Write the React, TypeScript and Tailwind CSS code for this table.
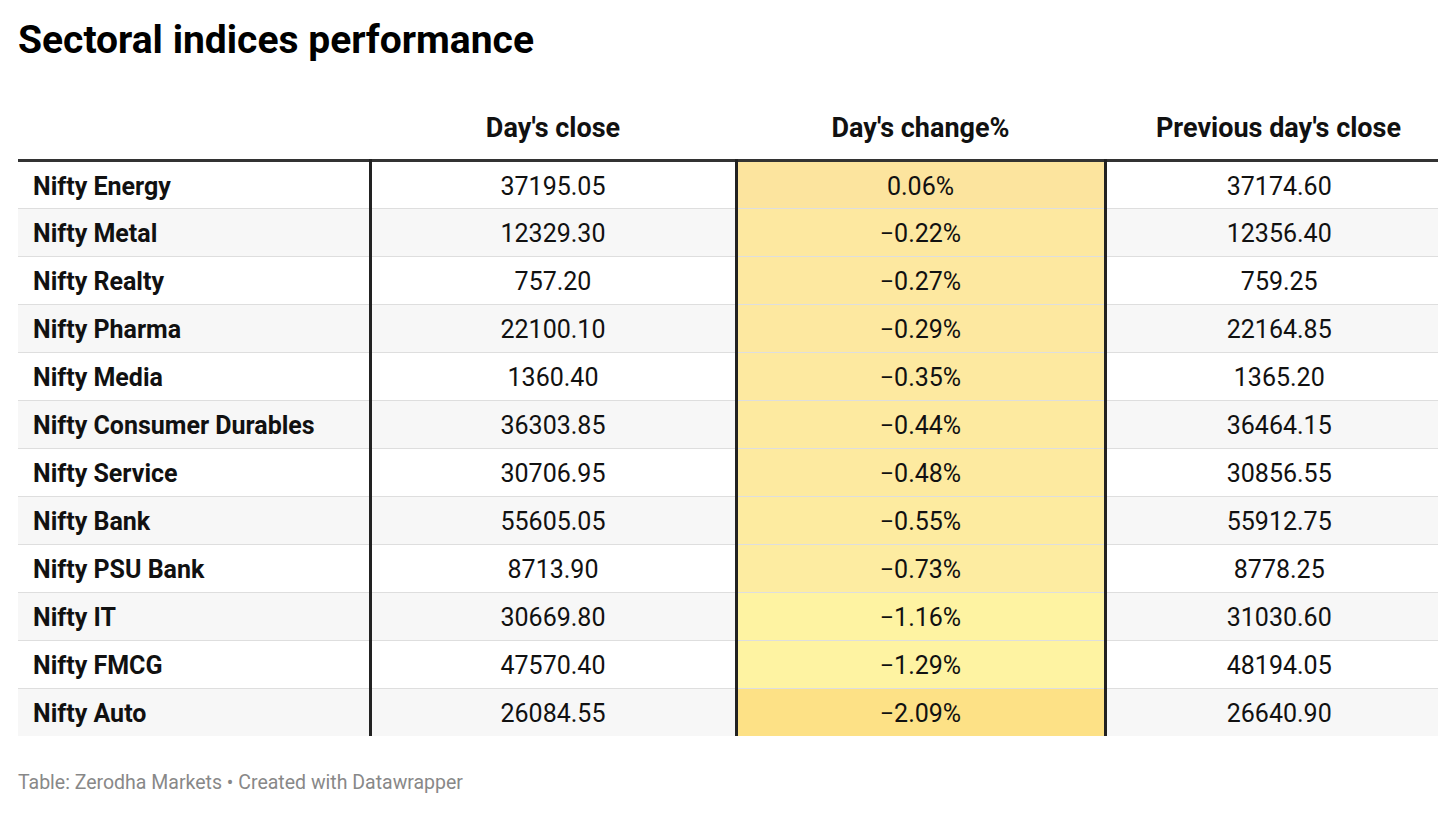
import React from "react";

const rows: [string, string, string, string, string][] = [
  ["Nifty Energy", "37195.05", "0.06%", "37174.60", "bg-[#fce49e]"],
  ["Nifty Metal", "12329.30", "\u22120.22%", "12356.40", "bg-[#fde8a0]"],
  ["Nifty Realty", "757.20", "\u22120.27%", "759.25", "bg-[#fde8a0]"],
  ["Nifty Pharma", "22100.10", "\u22120.29%", "22164.85", "bg-[#fde8a0]"],
  ["Nifty Media", "1360.40", "\u22120.35%", "1365.20", "bg-[#fde9a0]"],
  ["Nifty Consumer Durables", "36303.85", "\u22120.44%", "36464.15", "bg-[#fdeaa0]"],
  ["Nifty Service", "30706.95", "\u22120.48%", "30856.55", "bg-[#fdeaa0]"],
  ["Nifty Bank", "55605.05", "\u22120.55%", "55912.75", "bg-[#fdeba0]"],
  ["Nifty PSU Bank", "8713.90", "\u22120.73%", "8778.25", "bg-[#fdeca1]"],
  ["Nifty IT", "30669.80", "\u22121.16%", "31030.60", "bg-[#fef3a2]"],
  ["Nifty FMCG", "47570.40", "\u22121.29%", "48194.05", "bg-[#fef3a2]"],
  ["Nifty Auto", "26084.55", "\u22122.09%", "26640.90", "bg-[#fde186]"],
];

export default function App() {
  return (
    <div className="w-[1456px] h-[813px] bg-white text-[#111] px-[18px] pt-[17px]" style={{ fontFamily: "Roboto, 'Liberation Sans', sans-serif" }}>
      <h1 className="text-[39px] leading-[46px] font-bold text-black">Sectoral indices performance</h1>
      <table className="mt-[46px] w-[1420px] border-collapse table-fixed">
        <colgroup>
          <col className="w-[352px]" />
          <col className="w-[366px]" />
          <col className="w-[369px]" />
          <col className="w-[333px]" />
        </colgroup>
        <thead>
          <tr className="border-b-[3px] border-[#333] text-[27px] font-bold">
            <th className="h-[51px] pb-[16px]"></th>
            <th className="h-[51px] pb-[16px] text-center align-bottom leading-[30px]">Day's close</th>
            <th className="h-[51px] pb-[16px] text-center align-bottom leading-[30px]">Day's change%</th>
            <th className="h-[51px] pb-[16px] pl-[14px] text-center align-bottom leading-[30px]">Previous day's close</th>
          </tr>
        </thead>
        <tbody className="text-[25px]">
          {rows.map((r, i) => (
            <tr key={r[0]} className={`h-[48px] ${i < rows.length - 1 ? "border-b border-[#dedede]" : ""} ${i % 2 === 1 ? "bg-[#f7f7f7]" : "bg-white"}`}>
              <td className="pl-[15px] pt-[4px] font-bold border-r-[3px] border-r-[#222] leading-[28px]">{r[0]}</td>
              <td className="pt-[4px] text-center border-r-[3px] border-r-[#222] leading-[28px]">{r[1]}</td>
              <td className={`pt-[4px] text-center border-r-[3px] border-r-[#222] leading-[28px] ${r[4]}`}>{r[2]}</td>
              <td className="pt-[4px] pl-[14px] text-center leading-[28px]">{r[3]}</td>
            </tr>
          ))}
        </tbody>
      </table>
      <div className="mt-[35px] text-[19.5px] leading-[24px] text-[#888]">Table: Zerodha Markets • Created with Datawrapper</div>
    </div>
  );
}
